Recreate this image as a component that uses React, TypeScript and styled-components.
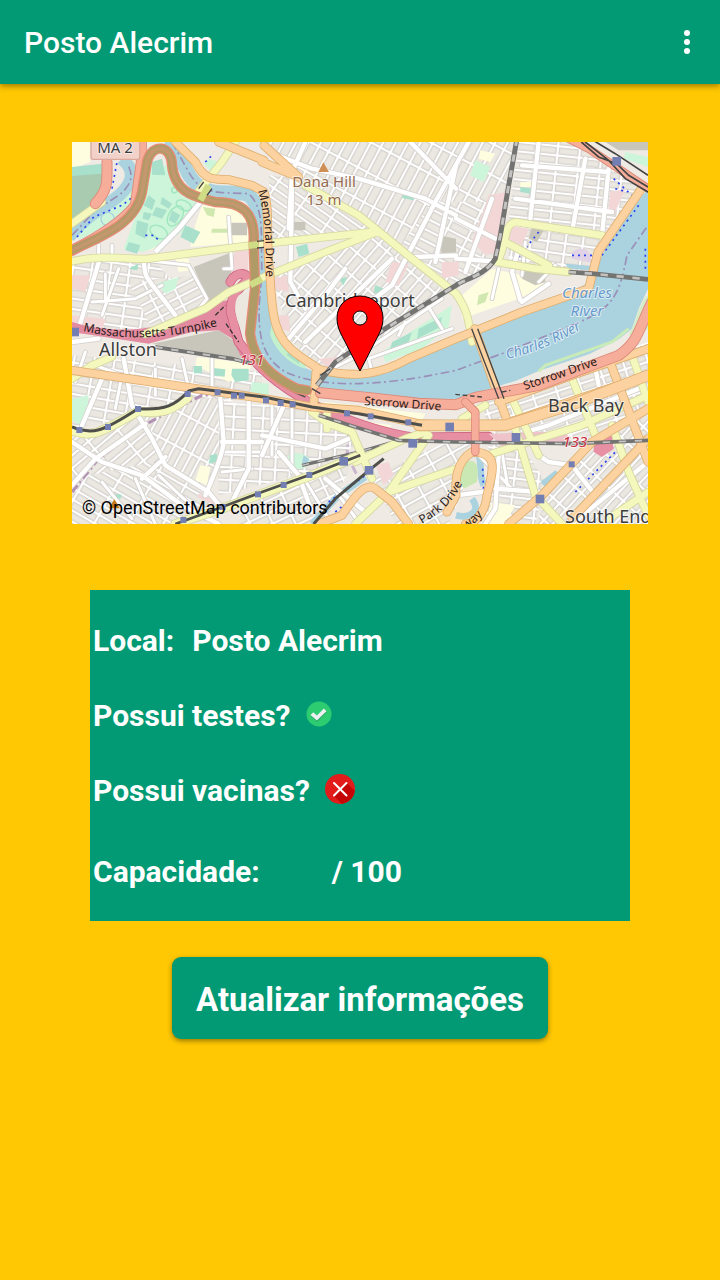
import React from 'react';
import styled, { createGlobalStyle } from 'styled-components';

const GlobalStyle = createGlobalStyle`
  * { box-sizing: border-box; }
  body {
    margin: 0;
    min-height: 100vh;
    background: #ffc803;
    font-family: Roboto, "Liberation Sans", sans-serif;
    color: #fff;
  }
`;

const Header = styled.header`
  display: flex;
  align-items: center;
  justify-content: space-between;
  height: 84px;
  padding: 0 18px 0 24px;
  background: #029a74;
  box-shadow: 0 2px 6px rgba(0, 0, 0, 0.4);
`;

const Title = styled.h1`
  margin: 0;
  padding-top: 2px;
  font-size: 30px;
  font-weight: 500;
  line-height: 36px;
`;

const MenuButton = styled.button`
  display: flex;
  align-items: center;
  justify-content: center;
  width: 30px;
  height: 48px;
  padding: 0;
  border: 0;
  background: none;
  color: inherit;
  cursor: pointer;
`;

const Content = styled.main`
  display: flex;
  flex-direction: column;
  align-items: center;
  padding-top: 58px;
  padding-bottom: 48px;
`;

const MapFrame = styled.figure`
  position: relative;
  width: 80%;
  margin: 0;
  overflow: hidden;

  svg { display: block; width: 100%; height: auto; }
`;

const Attribution = styled.figcaption`
  position: absolute;
  left: 10px;
  bottom: 5px;
  color: #000;
  font-size: 18px;
  line-height: 22px;
`;

const Panel = styled.section`
  width: 75%;
  margin-top: 66px;
  padding: 13px 3px 6px;
  background: #029a74;
`;

const Row = styled.div<{ $tall?: boolean; $icon?: boolean }>`
  display: flex;
  align-items: center;
  gap: ${p => (p.$icon ? 15 : 18)}px;
  height: ${p => (p.$tall ? 87 : 75)}px;
  font-size: 30px;
  font-weight: 700;
  line-height: 36px;

  svg { display: block; margin-bottom: 3px; }
`;

const Occupied = styled.span`
  width: 36px;
`;

const UpdateButton = styled.button`
  height: 82px;
  margin-top: 36px;
  padding: 3px 24px 0;
  border: 0;
  border-radius: 9px;
  background: #029a74;
  box-shadow: 0 2px 5px rgba(0, 0, 0, 0.4);
  color: #fff;
  font-family: inherit;
  font-size: 33px;
  font-weight: 700;
  line-height: 40px;
  cursor: pointer;
`;

type Kind = 'minor' | 'street' | 'secondary' | 'primary' | 'trunk' | 'motorway';

const roadStyle: Record<Kind, [string, string, number]> = {
  minor: ['#ffffff', '#d2cecb', 9],
  street: ['#ffffff', '#d6d2cf', 13],
  secondary: ['#f5f8bd', '#d5d7a0', 20],
  primary: ['#fcd3a0', '#dfae70', 22],
  trunk: ['#f6ad9a', '#dc8878', 32],
  motorway: ['#e78fa3', '#cf6680', 24],
};

function Roads({ kind, paths, width }: { kind: Kind; paths: string[]; width?: number }) {
  const [fill, casing, base] = roadStyle[kind];
  const w = width ?? base;
  const d = paths.join(' ');
  return (
    <g fill="none" strokeLinejoin="round" strokeLinecap="round">
      <path d={d} stroke={casing} strokeWidth={w + 5} />
      <path d={d} stroke={fill} strokeWidth={w} />
    </g>
  );
}

function Rail({ d, w = 12 }: { d: string; w?: number }) {
  return (
    <g fill="none">
      <path d={d} stroke="#737371" strokeWidth={w} />
      <path d={d} stroke="#c4c3c1" strokeWidth={w - 6} strokeDasharray="22 26" />
    </g>
  );
}

const districts: { id: string; angle: number; w: number; h: number; area: string }[] = [
  { id: 'mid-cambridge', angle: -62, w: 84, h: 33, area: 'M590 0H1340L1270 360L1140 450L900 260L640 90Z' },
  { id: 'riverside', angle: 35, w: 96, h: 26, area: 'M590 100L700 110L900 265L600 300Z' },
  { id: 'cambridgeport', angle: -49, w: 62, h: 32, area: 'M600 410L910 270L1120 450L900 620L760 690L660 600Z' },
  { id: 'east', angle: 6, w: 66, h: 28, area: 'M1340 0H1530L1728 150L1600 290L1310 230Z' },
  { id: 'east-low', angle: 8, w: 52, h: 32, area: 'M1310 230L1590 290L1560 400L1310 350Z' },
  { id: 'west', angle: 8, w: 56, h: 31, area: 'M0 350L240 345L370 500L330 560H0Z' },
  { id: 'west-mid', angle: -27, w: 74, h: 28, area: 'M170 420L370 400L410 490L240 560Z' },
  { id: 'harvard', angle: 27, w: 66, h: 31, area: 'M1080 180L1300 180L1270 360L1140 440L980 320Z' },
  { id: 'allston', angle: 10, w: 60, h: 31, area: 'M0 640L570 690V760L0 860Z' },
  { id: 'allston-mid', angle: -62, w: 94, h: 28, area: 'M210 800L460 760V1000L330 1050L230 890Z' },
  { id: 'brighton', angle: -40, w: 90, h: 30, area: 'M0 890L200 800L280 980L200 1000L60 1020L0 1080Z' },
  { id: 'brighton-low', angle: 30, w: 90, h: 29, area: 'M0 1010L240 960L470 1090L350 1146H0Z' },
  { id: 'brookline', angle: 3, w: 44, h: 38, area: 'M440 780L740 800L850 910L720 990L440 1060Z' },
  { id: 'brookline-low', angle: -25, w: 62, h: 34, area: 'M520 1060L850 940L760 1146H500Z' },
  { id: 'fenway-north', angle: -29, w: 68, h: 36, area: 'M900 1000L1170 880L1220 930L1130 1146H970Z' },
  { id: 'back-bay', angle: -18, w: 72, h: 27, area: 'M1230 780L1728 600V860L1260 920Z' },
  { id: 'fens', angle: 7, w: 72, h: 28, area: 'M1250 910L1350 910L1420 1020L1390 1146L1240 1146Z' },
  { id: 'south-end', angle: -47, w: 68, h: 27, area: 'M1480 960L1728 810V1146H1390Z' },
];

const greens = [
  'M230 80L290 70L310 140L380 180L330 270L240 320L210 330L155 320L190 225Z',
  'M255 425L320 405L310 440L280 455Z',
  'M25 230L60 210L190 140L195 175L120 240L20 295Z',
  'M410 50L440 60L425 95L395 65Z',
  'M1030 560L1140 490L1130 555L1050 620L940 660L930 630Z',
  'M1210 55L1255 75L1235 120L1195 100Z',
  'M0 770L50 760L45 820L25 850L0 835Z',
  'M540 720L590 725V770L535 750Z',
  'M1660 30L1728 45V75L1655 50Z',
];

const darkGreens = [
  'M240 60L270 50L280 100L240 98Z', 'M230 160L250 175L240 205L215 190Z', 'M252 195L285 205L270 230L240 220Z',
  'M195 235L230 245L220 290L190 275Z', 'M270 165L300 185L290 200L265 185Z', 'M300 205L325 220L310 245L290 235Z',
  'M340 250L385 270L365 305L325 285Z', 'M170 300L205 310L195 335L160 325Z', 'M215 210L240 215L230 235L212 230Z',
  'M0 75L90 65V95L0 102Z', 'M365 672H390V694H365Z', 'M415 677L460 682L458 704L413 700Z', 'M480 680L530 680V715L490 720L478 700Z',
  'M672 315L705 305L712 335L680 345Z', 'M995 150L1030 155L1025 175L990 168Z', 'M1345 135L1380 140L1378 155L1345 150Z',
  'M800 410L825 405L815 430Z', 'M910 430L935 440L925 460L905 450Z', 'M960 600L1020 570L1010 600L955 620Z', 'M1040 560L1110 525L1105 555L1035 590Z',
  'M180 375L200 365L195 385L170 380Z', 'M120 1055L150 1058L145 1070L115 1068Z', 'M415 940L435 935V960L410 965Z',
];

const creams = [
  'M390 190L520 205L530 300L355 315L370 250Z', 'M0 0H55V60L0 80Z', 'M220 290L260 295L255 325L220 320Z',
  'M310 345L350 350L355 385L320 390Z', 'M1170 460L1260 380L1350 400L1430 430L1340 470L1170 530Z',
  'M1225 25L1270 35L1255 60L1220 50Z', 'M375 645L540 665L530 690L470 720L370 670Z', 'M385 970L415 975L405 1030L370 1015Z',
  'M1260 1080L1330 1090L1300 1146H1235Z', 'M760 780L1060 815L1050 835L740 800Z', 'M1345 120H1385V135H1345Z', 'M780 825L960 850L940 865L790 845Z',
];

const pinks = [
  'M0 400H55L40 450L0 440Z', 'M490 325L530 325L528 390L470 390Z', 'M0 520L100 530L90 576H0Z', 'M1250 160L1300 150L1280 330L1240 340L1200 300Z',
  'M1310 250L1370 260L1350 310L1300 290Z', 'M960 360L1010 365L980 430L940 420Z', 'M600 410L650 400L650 450L605 440Z',
  'M620 520L650 520L655 570L625 560Z', 'M1615 150L1660 140L1630 210H1608Z', 'M910 970L950 960L965 1000L935 1030Z',
  'M380 1055L450 1080L440 1095L375 1065Z', 'M1110 360L1160 360V400L1110 410Z', 'M740 650L800 645L770 680Z',
];

const greys = [
  'M365 375L480 330L475 460L410 480Z', 'M478 242H525V280H478Z', 'M1380 255L1415 265L1395 300L1370 290Z',
  'M1360 385L1420 390V420L1390 430L1350 410Z', 'M1600 0H1728V25H1640Z', 'M240 605L440 565L490 600L515 650L470 645Z',
  'M1100 280L1152 290V340H1110Z', 'M660 240L700 240V265L660 265Z',
];

const river =
  'M555 400L596 400C592 500 590 560 620 605C650 650 700 690 776 701C880 715 930 690 1016 646L1152 596L1212 572L1352 520L1500 450L1560 415L1590 340L1640 250L1728 140V440L1700 500L1680 560L1640 592L1552 636L1402 686L1332 716L1252 741L1152 771L1076 776L976 761L736 750C660 735 570 690 545 610Z';

const minorStreets = [
  'M330 560L405 470L350 370L220 355', 'M60 480L190 470L270 430', 'M100 395V470M140 380L90 520',
  'M250 680V760M330 650L350 740M420 650V755', 'M70 670L150 700L130 800', 'M40 630L10 720',
  'M260 1000L400 1130M190 1010L250 1146M90 1020L180 1130', 'M460 930H570M450 990L540 980M600 780V940M660 790V990',
  'M1280 380L1260 470M1360 300L1350 400M1450 370L1400 420', 'M740 980L860 1140M690 1000L770 1130',
  'M1220 940L1330 1050M1290 930L1310 1050', 'M980 580L1000 540M1060 480L1110 560', 'M80 310V350M120 310V350M470 225L480 380H455',
  'M760 690L860 640L1110 470', 'M900 690L890 650L1140 560',
];

const mainStreets = [
  'M82 355L20 560', 'M215 350C220 420 215 390 310 520', 'M660 130L655 420L700 500', 'M700 0L660 90L650 260', 'M590 30L720 80L860 110L1060 170L1152 220',
  'M1015 0L1152 140', 'M1190 0L1090 180L960 430L840 520', 'M1152 70L1090 360', 'M1152 340L1030 345', 'M1152 230L1270 290', 'M1152 350L1290 360',
  'M1400 0L1375 230M1540 50L1500 270M1610 80L1590 280M1350 70L1610 90M1330 170L1620 210', 'M1260 170L1180 390',
  'M1340 320L1320 390L1345 475', 'M1350 480L1430 425', 'M90 710L30 850', 'M155 650L180 790L240 890L280 970L410 1050L450 1100',
  'M220 845L70 950L0 1030', 'M0 900L90 960L210 1000L330 1090L440 1146', 'M210 1010L280 945', 'M445 770L455 900C450 950 420 1010 400 1060',
  'M530 780V980L480 1080', 'M450 900H570', 'M620 930L680 1000L720 1110', 'M570 940L640 780', 'M650 590L760 460L820 380', 'M700 600L960 350',
  'M1280 940L1270 1100L1240 1146', 'M1400 940L1430 960L1500 970L1570 1060', 'M1270 1040L1400 1050', 'M1152 1060L1230 1050',
  'M0 600L80 590', 'M760 1010L880 1110', 'M830 890L760 920L570 880', 'M1500 1146L1728 960', 'M1360 870L1430 850L1700 740', 'M1570 680L1580 730',
];

const secondary = [
  'M0 358C100 335 180 355 230 350L576 305L920 268', 'M220 576L400 500L470 450L576 405L760 330L920 268',
  'M370 160L450 60L490 0', 'M700 130L860 220L920 268L1020 350L1152 455C1190 510 1190 540 1200 600', 'M0 245L90 180',
  'M0 710L60 670L120 645', 'M1590 280L1330 240C1290 250 1310 300 1275 360L1390 380L1490 390', 'M1290 295L1430 370',
  'M1320 770L1400 940', 'M1330 860L1390 1060L1470 1146', 'M1260 935L1400 890L1530 850L1728 760',
  'M1500 710L1570 880', 'M1680 640L1728 780', 'M1620 850L1670 990L1728 1120',
  'M720 810L770 845L840 870L900 1010', 'M850 960L1000 890L1060 870', 'M850 1146L950 1050L1070 880', 'M950 1050L1152 980', 'M765 810V860',
  'M1240 790L1170 830', 'M1610 1130L1728 1050',
];

const primary = [
  'M310 0L370 60C400 120 430 110 470 113L540 130L576 150C595 200 580 300 594 400C600 520 605 590 680 640C720 670 730 670 740 682C850 712 930 695 1010 650L1152 590L1350 510L1550 440L1578 330L1705 145',
  'M440 0L576 55', 'M576 10L680 105L570 60',
  'M0 685L340 735L576 770L720 795L860 805L1040 845L1152 850L1300 845L1728 700',
  'M1280 780L1500 700L1728 620', 'M725 790L732 690', 'M1208 560L1310 850', 'M1610 650L1728 960',
  'M1310 1146L1410 1060L1560 900L1728 800', 'M1500 1130L1728 890',
  'M740 1146L810 1120C850 1060 880 1020 910 1040L960 1080L1010 1146', 'M1200 930C1150 960 1150 1020 1152 1060L1125 1110M1200 930C1280 930 1265 980 1245 1060C1240 1110 1210 1146 1180 1146',
];

const stations: [number, number, number][] = [
  [22, 864, 18], [108, 855, 18], [198, 801, 18], [347, 756, 18], [437, 751, 18], [486, 761, 18], [509, 761, 18], [582, 775, 18],
  [626, 783, 18], [662, 787, 18], [825, 814, 18], [896, 823, 18], [1009, 841, 18], [1133, 855, 26], [1022, 904, 26],
  [815, 958, 26], [891, 985, 26], [712, 999, 18], [635, 1029, 18], [558, 1057, 18], [452, 1095, 18], [334, 1134, 18],
  [1332, 886, 26], [1499, 967, 18], [1404, 1071, 26], [1634, 58, 26], [8, 570, 26],
];

const parkway =
  'M0 325C80 285 190 250 210 150L225 60C240 0 300 10 300 70C310 160 380 165 430 180C510 180 550 210 545 300L549 440L534 574C545 660 600 705 674 740L705 745';

const Label = styled.text<{ $size?: number; $tone?: string; $italic?: boolean; $bold?: boolean }>`
  font-family: "Noto Sans", "Open Sans", sans-serif;
  font-size: ${p => p.$size ?? 18}px;
  font-style: ${p => (p.$italic ? 'italic' : 'normal')};
  font-weight: ${p => (p.$bold ? 700 : 400)};
  fill: ${p => p.$tone ?? '#3c3c3c'};
  stroke: rgba(255, 255, 255, 0.6);
  stroke-width: 2px;
  stroke-linejoin: round;
  paint-order: stroke;
`;

const RoadLabel = styled.text`
  font-family: "Noto Sans", "Open Sans", sans-serif;
  font-size: 12px;
  fill: #2b1c19;
`;

function StreetMap() {
  return (
    <svg viewBox="0 0 576 382" role="img" aria-label="Mapa da região">
      <defs>
        {districts.map(a => (
          <pattern key={a.id} id={a.id} width={a.w} height={a.h} patternUnits="userSpaceOnUse" patternTransform={`rotate(${a.angle})`}>
            <rect width={a.w} height={a.h} fill="#fff" />
            <rect x="5" y="5" width={a.w - 10} height={a.h - 10} fill="#ebe7e1" stroke="#cfcbc7" strokeWidth="3" />
          </pattern>
        ))}
        <path id="memorial" d="M186 49C193 72 194 100 194 136" />
        <path id="turnpike" d="M11 189C55 199 95 197 146 184" />
        <path id="charles" d="M435 217C462 211 488 200 518 182" />
        <path id="park" d="M350 382C365 373 379 363 389 344" />
        <path id="fenway" d="M377 399C394 388 406 380 416 367" />
      </defs>
      <g transform="scale(0.33333333)">
        <rect width="1728" height="1149" fill="#efebe4" />
        <path d="M0 100L90 90V190L0 240Z" fill="#a9cbaf" />
        {districts.map(a => <path key={a.id} d={a.area} fill={`url(#${a.id})`} />)}
        <path d={creams.join('')} fill="#fffde0" />
        <path d={greens.join('')} fill="#cdf5da" />
        <path d={pinks.join('')} fill="#f3d7d7" />
        <path d={greys.join('')} fill="#c8c6ba" />
        <path d={darkGreens.join('')} fill="#a8e0cb" />
        <path d="M392 195L430 200L425 225L405 220ZM420 260H468V272H418ZM1220 460L1250 450L1240 480L1215 490ZM1130 110L1150 70L1152 90ZM1485 25L1500 0" fill="#d0e8b0" />
        <g fill="none" stroke="#9ee6be" strokeWidth="4">
          <ellipse cx="310" cy="222" rx="20" ry="33" transform="rotate(32 310 222)" />
          <ellipse cx="260" cy="270" rx="28" ry="18" transform="rotate(28 260 270)" />
          <ellipse cx="335" cy="190" rx="24" ry="14" transform="rotate(25 335 190)" />
          <circle cx="307" cy="145" r="8" />
        </g>
        <path d="M1500 330C1530 310 1560 320 1558 362L1500 350Z" fill="#e2d2e6" />
        <path d="M1480 365L1560 372V385L1490 380Z" fill="#aad3df" />

        <path d={river} fill="#aad3df" />
        <path d="M600 545L640 590L705 655L700 680C650 665 605 620 594 575Z" fill="#c3f0cd" />
        <path d="M650 620L690 650L680 665L645 640Z" fill="#a8e0cb" />
        <path d="M1728 460C1700 480 1700 530 1670 576L1690 590L1728 560Z" fill="#d5ecc6" />
        <path d="M1400 688L1420 670L1620 600L1670 560" fill="none" stroke="#c9ebb8" strokeWidth="9" />
        <g fill="none" stroke="#aad3df" strokeLinejoin="round">
          <path d="M-10 285C60 195 150 180 175 115C185 80 160 60 150 50" strokeWidth="38" />
          <path d="M280 0C340 30 330 100 385 135C430 165 490 140 530 160C570 190 570 260 572 420" strokeWidth="42" />
          <path d="M1220 940C1230 960 1220 1000 1235 1030M1200 1070C1230 1110 1190 1130 1152 1120M720 1146L800 1060L880 1005" strokeWidth="20" />
        </g>
        <ellipse cx="675" cy="958" rx="38" ry="24" fill="#cdf5da" />
        <path d="M695 940L712 952L702 968L690 962Z" fill="#aad3df" />
        <path d="M1170 965C1220 940 1220 980 1215 1020L1175 1040C1160 1010 1160 990 1170 965Z" fill="#c9e8b4" />
        <path d="M1405 1020L1450 985L1460 995L1420 1035Z" fill="#aad3df" />
        <circle cx="107" cy="231" r="20" fill="none" stroke="#aad3df" strokeWidth="4" />
        <g fill="none" stroke="#9b8fb8" strokeWidth="5" strokeDasharray="26 10 6 10">
          <path d="M0 280L70 205L140 160C190 120 180 90 165 65" />
          <path d="M300 0L350 90C390 160 430 150 530 155C580 200 565 280 570 400C550 560 560 640 640 690C740 735 900 740 1152 685L1290 635L1500 550C1620 500 1640 470 1665 340L1728 250" />
          <path d="M0 1050L80 950L200 860L270 820L390 760L480 755" stroke="#b292b4" strokeWidth="9" />
          <path d="M835 820L825 940L855 1000" stroke="#c9b5cd" strokeWidth="9" />
        </g>
        <g fill="none" stroke="#2b43ee" strokeWidth="5" strokeDasharray="6 12">
          <path d="M15 285L65 225L150 190L195 155L200 60" />
          <path d="M120 140L135 60M220 280H245L265 300M400 60L425 35M1340 345L1400 270" />
          <path d="M1500 340L1590 340L1700 190M1625 110L1680 160M1630 140L1665 150M1720 320V390" />
          <path d="M770 1080L880 1000M790 1110L850 1060" />
          <path d="M1510 1050L1640 920M1232 980L1235 1050" />
        </g>

        <Roads kind="minor" paths={minorStreets} />
        <Roads kind="street" paths={mainStreets} />
        <path d="M250 330L320 260L385 180" fill="none" stroke="#ccc" strokeWidth="19" />
        <path d="M250 330L320 260L385 180" fill="none" stroke="#fff" strokeWidth="14" />

        <path d="M0 540C110 575 230 565 300 540L440 480L485 470C470 510 490 560 535 640L510 650L480 590L440 565L360 570L230 605L0 570Z" fill="#e28ba0" />
        <Roads kind="motorway" paths={['M475 420C490 385 540 390 520 420C490 450 475 470 476 510L500 600C560 680 620 730 710 780C800 830 950 880 1030 886L1250 884']} />
        <path d="M490 510C485 460 510 445 532 455L530 510L515 570C505 560 495 540 490 510Z" fill="#ece8e0" />
        <path d="M430 520L460 490M462 545L500 600" stroke="#333" strokeWidth="4" strokeDasharray="14 7" fill="none" />
        <path d="M1250 875L1480 868L1500 905L1290 915Z" fill="#efc3ca" />
        <path d="M1565 905L1620 880L1625 920L1590 945L1565 930Z" fill="#e78fa3" />
        <path d="M545 650C590 710 650 745 700 765" fill="none" stroke="#55534b" strokeWidth="5" />

        <Rail d="M690 970L860 930L1000 890" w={10} />
        <Roads kind="secondary" paths={secondary} />
        <Roads kind="secondary" paths={['M0 865C60 890 90 870 198 808C280 820 310 795 347 767', 'M310 1146L450 1100L570 1055L720 1000L850 945']} width={24} />
        <Roads kind="primary" paths={primary} />
        <Roads kind="primary" paths={['M1040 850H1300L1500 788L1728 700']} width={30} />
        <Roads kind="trunk" paths={['M208 0V60L190 190C150 240 80 285 0 325', 'M105 60C105 120 110 140 70 185', 'M745 752L900 768L1040 784L1152 788L1210 766L1400 730L1640 640C1700 600 1700 560 1740 480']} width={28} />
        <Roads kind="trunk" paths={['M1210 930V810L1180 780', 'M1490 -10L1550 20L1640 80L1728 140']} width={20} />
        <g fill="none" strokeLinejoin="round" strokeLinecap="round">
          <path d={parkway} stroke="#e38b75" strokeWidth="31" />
          <path d={parkway} stroke="#b09b67" strokeWidth="23" />
          <path d="M0 325C80 285 190 250 210 150L225 60C240 0 300 10 300 70C310 160 380 165 430 180C510 180 550 210 545 300" stroke="#c4976f" strokeWidth="11" />
        </g>
        <path d="M530 311L560 307M535 429L570 411M385 175L410 130" stroke="#cfdc85" strokeWidth="20" />

        <Rail d="M1335 -10L1310 130L1285 280L1270 350C1240 400 1180 410 1152 430L940 560L790 660L735 730" w={15} />
        <Rail d="M250 615L480 650L540 665" w={12} />
        <Rail d="M740 820L850 855L980 895L1152 900L1500 905L1728 895" w={11} />
        <Rail d="M1490 390L1560 395L1728 412" w={14} />
        <g fill="none" stroke="#4e4e4b" strokeWidth="9" strokeLinejoin="round">
          <path d="M0 855C60 880 90 870 198 800C280 805 310 790 350 747L380 740L576 765L720 795L860 815L1050 850" />
          <path d="M310 1146L450 1095L570 1050L712 999L865 940" strokeWidth="8" />
          <path d="M725 1146L790 1070L891 985L935 950" />
        </g>
        <g fill="none" stroke="#444" strokeWidth="5">
          <path d="M1528 0L1580 45L1634 65L1670 100L1728 135M1555 -10L1630 35L1728 100M1540 0L1610 55L1660 110L1728 150" />
          <path d="M1199 560L1280 770M1217 560L1296 770M745 700L775 680M720 740L745 755" strokeWidth="4" />
          <path d="M380 140L395 120M405 160L420 140M555 298L576 296M555 318L576 316" strokeWidth="4" />
          <path d="M1150 757L1230 765M1290 750L1315 745" strokeDasharray="14 8" strokeWidth="4" />
        </g>
        <g fill="#737fb3">
          {stations.map(([x, y, s]) => <rect key={`${x}-${y}`} x={x - s / 2} y={y - s / 2} width={s} height={s} />)}
        </g>
        <path d="M754 61L771 90H739Z" fill="#d08f55" />
        <path d="M127 1072L143 1099H111Z" fill="#c77818" />
        <rect x="57" y="-8" width="146" height="60" rx="6" fill="#f2d2c8" stroke="#dba99d" strokeWidth="4" />
      </g>

      <Label x="43" y="11" $size={15} textAnchor="middle">MA 2</Label>
      <Label x="252" y="45" $size={15} $tone="#946b50" textAnchor="middle">Dana Hill</Label>
      <Label x="252" y="63" $size={15} $tone="#946b50" textAnchor="middle">13 m</Label>
      <Label x="213" y="165">Cambridgeport</Label>
      <Label x="27" y="214">Allston</Label>
      <Label x="476" y="270">Back Bay</Label>
      <Label x="493" y="381">South End</Label>
      <Label x="180" y="223" $size={15} $tone="#c82f40" $italic textAnchor="middle">131</Label>
      <Label x="503" y="305" $size={15} $tone="#c82f40" $italic textAnchor="middle">133</Label>
      <Label x="515" y="156" $size={15} $tone="#6699cc" $italic textAnchor="middle">Charles</Label>
      <Label x="515" y="174" $size={15} $tone="#6699cc" $italic textAnchor="middle">River</Label>
      <Label $size={14} $tone="#6699cc" $italic><textPath href="#charles">Charles River</textPath></Label>
      <RoadLabel><textPath href="#memorial">Memorial Drive</textPath></RoadLabel>
      <RoadLabel><textPath href="#turnpike">Massachusetts Turnpike</textPath></RoadLabel>
      <RoadLabel transform="translate(292 263) rotate(4)">Storrow Drive</RoadLabel>
      <RoadLabel transform="translate(453 248) rotate(-19)">Storrow Drive</RoadLabel>
      <RoadLabel><textPath href="#park">Park Drive</textPath></RoadLabel>
      <RoadLabel><textPath href="#fenway">Fenway</textPath></RoadLabel>

      <path
        d="M288 229L269 192C266 186 265 181 265 176C265 163 275 154 288 154S311 163 311 176C311 181 310 186 307 192ZM288 169A7 7 0 1 0 288 183A7 7 0 1 0 288 169Z"
        fill="#f00"
        fillRule="evenodd"
        stroke="#000"
        strokeWidth="1"
      />
    </svg>
  );
}

function CheckIcon() {
  return (
    <svg width="26" height="26" viewBox="0 0 26 26" role="img" aria-label="Sim">
      <circle cx="13" cy="13" r="12.5" fill="#2ecc71" />
      <path d="M5 15l3-3 3 3 7-7 3 3-10 10z" fill="#27a862" />
      <path d="M4.500 14l2.800-2.800 3.600 3.400 7-7 2.600 2.600-9.600 9.400z" fill="#ecf0f1" />
    </svg>
  );
}

function CrossIcon() {
  return (
    <svg width="30" height="30" viewBox="0 0 30 30" role="img" aria-label="Não">
      <circle cx="15" cy="15" r="15" fill="#e21b1b" />
      <path d="M21.5 8.5L29.7 17A15 15 0 0 1 17 29.9L8.5 21.5Z" fill="#c40606" />
      <path d="M9 9L21.5 21.5M21.5 9L9 21.5" stroke="#fff" strokeWidth="2" strokeLinecap="round" />
    </svg>
  );
}

export default function App() {
  return (
    <>
      <GlobalStyle />
      <Header>
        <Title>Posto Alecrim</Title>
        <MenuButton type="button" aria-label="Mais opções">
          <svg width="8" height="24" viewBox="0 0 8 24" fill="currentColor">
            <circle cx="4" cy="3" r="3" />
            <circle cx="4" cy="12" r="3" />
            <circle cx="4" cy="21" r="3" />
          </svg>
        </MenuButton>
      </Header>
      <Content>
        <MapFrame>
          <StreetMap />
          <Attribution>© OpenStreetMap contributors</Attribution>
        </MapFrame>
        <Panel>
          <Row><span>Local:</span><span>Posto Alecrim</span></Row>
          <Row $icon><span>Possui testes?</span><CheckIcon /></Row>
          <Row $icon><span>Possui vacinas?</span><CrossIcon /></Row>
          <Row $tall><span>Capacidade:</span><Occupied /><span>/ 100</span></Row>
        </Panel>
        <UpdateButton type="button">Atualizar informações</UpdateButton>
      </Content>
    </>
  );
}
